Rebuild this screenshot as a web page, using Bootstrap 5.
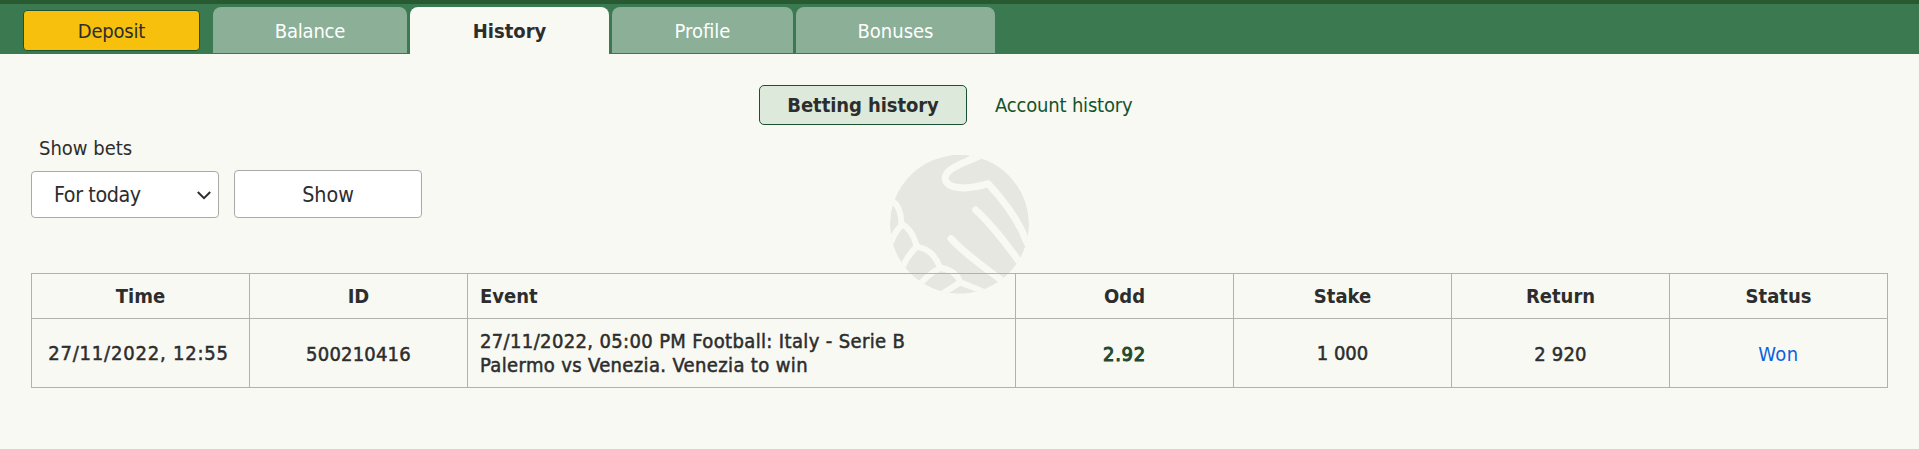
<!DOCTYPE html>
<html lang="en">
<head>
<meta charset="utf-8">
<title>Betting history</title>
<link href="https://cdn.jsdelivr.net/npm/bootstrap@5.3.0/dist/css/bootstrap.min.css" rel="stylesheet">
<style>
body{background:#f8f9f3;color:#2d2d2d;font-family:"DejaVu Sans Condensed","DejaVu Sans",sans-serif;font-size:20px;line-height:24px;min-height:449px;overflow:hidden}
.topbar{height:54px;background:#3b7a50;border-top:4px solid #275a30;padding-left:23px;padding-top:3px}
.deposit{width:177px;height:41px;margin:3px 13px 0 0;padding:0;background:#f7c00c;border:1px solid #1e5232;border-radius:4px;color:#2d2d2d;font-size:20px;line-height:24px;letter-spacing:-.2px}
.tabs{gap:3px}
.tabs .nav-link{height:46px;padding:1px 0 0;border-radius:8px 8px 0 0;background:#8bb097;color:#fff;display:flex;align-items:center;justify-content:center}
.tabs .nav-link.active{height:47px;padding:0;background:#f8f9f3;color:#2d2d2d;font-weight:700}
.w-balance{width:194px;letter-spacing:-.2px}.w-history{width:199px}.w-profile{width:181px}.w-bonuses{width:199px}
.modes{margin:31px 0 0 759px;height:41px}
.mode-on{width:208px;height:40px;margin-bottom:1px;padding:0 0 1px;background:#dce9db;border:1px solid #1c5032;border-radius:5px;color:#2d2d2d;font-weight:700;font-size:20px;line-height:24px;letter-spacing:-.08px}
.mode-off{margin-left:28px;color:#14532a;letter-spacing:-.18px;padding-bottom:2px}
.filters{margin:10px 0 0 31px}
.filters label{margin-left:8px;height:34px}
.field{height:48px;width:188px;background:#fff;border:1px solid #a9aaa5;border-radius:4px;color:#2d2d2d;font-size:21.3px;padding:0;line-height:24px}
.period{padding:1px 7px 0 22px;margin-top:1px;height:47px;letter-spacing:-.4px}
.go{padding-top:2px}
.bets{width:1857px;margin:55px 0 0 31px;table-layout:fixed;border-collapse:collapse;--bs-table-bg:transparent;color:#2d2d2d;--bs-table-color:#2d2d2d}
.bets>:not(caption)>*>*{border:1px solid #b0b3ab;padding:0 12px;vertical-align:middle;text-align:center;white-space:nowrap;background:none}
.bets .c-std{width:218px}.bets .c-event{width:548px}
.bets thead tr{height:45px}.bets tbody tr{height:69px}
.bets tbody td{-webkit-text-stroke:.5px currentColor}
.bets .event{text-align:left;line-height:24px;letter-spacing:.36px}
.bets .when{letter-spacing:.8px;padding:0 4px 0 0}
.bets .ident{letter-spacing:.2px;padding-top:2px}
.bets .odd{color:#22492f;-webkit-text-stroke:1px #22492f;letter-spacing:.7px;padding-top:2px}
.bets .won{color:#0b63dc;-webkit-text-stroke:0;letter-spacing:.5px;padding-top:2px}
.watermark{left:880px;top:145px;z-index:-1}
</style>
</head>
<body class="position-relative">
<header class="topbar d-flex align-items-start">
  <button class="btn deposit">Deposit</button>
  <nav class="nav tabs">
    <a class="nav-link w-balance" href="#">Balance</a>
    <a class="nav-link active w-history" href="#">History</a>
    <a class="nav-link w-profile" href="#">Profile</a>
    <a class="nav-link w-bonuses" href="#">Bonuses</a>
  </nav>
</header>
<svg class="watermark position-absolute" width="160" height="155" viewBox="0 0 480 465" aria-hidden="true">
  <defs><clipPath id="disc"><circle cx="238.5" cy="238" r="208.5"/></clipPath></defs>
  <g clip-path="url(#disc)">
    <circle cx="238.5" cy="238" r="208.5" fill="#e6e7e1"/>
    <g fill="none" stroke="#f8f9f3" stroke-width="21" stroke-linecap="round" stroke-linejoin="round">
      <path d="M300 32C262 50 220 62 203 82C187 100 197 119 225 126C258 133 292 126 324 116C365 160 410 214 436 282L450 310"/>
      <path d="M287 195C335 238 378 296 420 353L440 380"/>
      <path d="M213 281C252 325 312 366 362 404L395 430"/>
      <path stroke-width="18" d="M38 168C58 183 64 207 64 236C90 249 102 272 110 305C147 312 166 332 180 368C212 373 232 386 241 412C262 422 285 428 305 438"/>
      <path stroke-width="18" d="M66 240C50 254 42 268 34 290"/>
      <path stroke-width="18" d="M112 303C92 322 78 342 68 366"/>
      <path stroke-width="18" d="M182 368C156 382 136 397 118 420"/>
      <path stroke-width="18" d="M241 412C226 422 210 432 190 444"/>
    </g>
  </g>
</svg>
<main>
  <div class="modes d-flex align-items-center">
    <button class="btn mode-on">Betting history</button>
    <a class="mode-off text-decoration-none" href="#">Account history</a>
  </div>
  <form class="filters">
    <label class="d-block" for="period">Show bets</label>
    <div class="d-flex" style="gap:15px">
      <button type="button" id="period" class="btn field period d-flex align-items-center justify-content-between">
        <span>For today</span>
        <svg width="14" height="9" viewBox="0 0 14 9" fill="none" stroke="#2d2d2d" stroke-width="2"><path d="M.8 1L7 7.2L13.2 1"/></svg>
      </button>
      <button type="button" class="btn field go">Show</button>
    </div>
  </form>
  <table class="table bets">
    <colgroup><col class="c-std"><col class="c-std"><col class="c-event"><col class="c-std"><col class="c-std"><col class="c-std"><col class="c-std"></colgroup>
    <thead><tr><th>Time</th><th>ID</th><th class="text-start">Event</th><th>Odd</th><th>Stake</th><th>Return</th><th>Status</th></tr></thead>
    <tbody><tr>
      <td class="when">27/11/2022, 12:55</td>
      <td class="ident">500210416</td>
      <td class="event">27/11/2022, 05:00 PM Football: Italy - Serie B<br>Palermo vs Venezia. Venezia to win</td>
      <td class="odd">2.92</td>
      <td>1 000</td>
      <td class="ident">2 920</td>
      <td class="won">Won</td>
    </tr></tbody>
  </table>
</main>
<script src="https://cdn.jsdelivr.net/npm/bootstrap@5.3.0/dist/js/bootstrap.bundle.min.js"></script>
</body>
</html>
